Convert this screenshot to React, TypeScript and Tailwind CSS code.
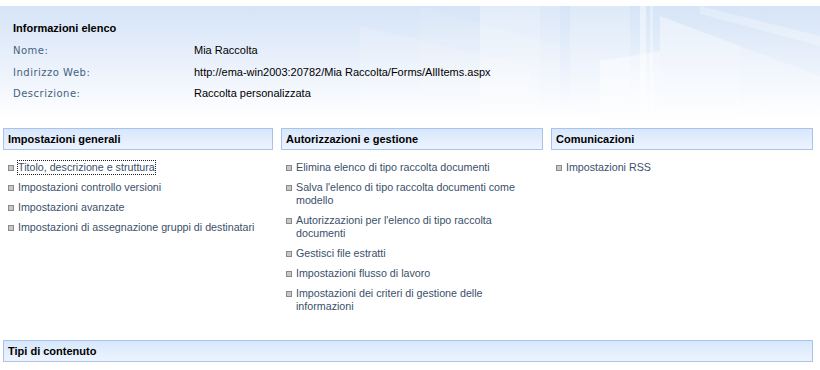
import React from "react";

const tahoma = { fontFamily: '"Liberation Sans", Arial, sans-serif' };

function Bullet() {
  return (
    <span className="mt-[4px] mr-[4px] inline-block h-[6px] w-[6px] shrink-0 border border-[#8a8a8a] bg-[#c8c8c8]" />
  );
}

function Item({ text, focus }: { text: string; focus?: boolean }) {
  return (
    <li className="flex items-start pl-[5px]">
      <Bullet />
      <span
        className={
          "text-[10.7px] leading-[13px] text-[#3b4f6b] " +
          (focus ? "outline-1 outline-dotted outline-[#222]" : "")
        }
      >
        {text}
      </span>
    </li>
  );
}

function Section({ title, items, className }: { title: string; items: string[]; className: string }) {
  return (
    <div className={className}>
      <div className="flex h-[22px] items-center border border-[#a9c4ec] bg-gradient-to-b from-[#d7e7fc] to-[#edf4fe] pl-[4px] text-[11px] font-bold text-black">
        {title}
      </div>
      <ul className="mt-[11px] flex flex-col gap-[7px]">
        {items.map((t, i) => (
          <Item key={t} text={t} focus={title === "Impostazioni generali" && i === 0} />
        ))}
      </ul>
    </div>
  );
}

function Buildings() {
  return (
    <svg className="absolute right-0 top-0 h-full w-[460px]" viewBox="0 0 460 114" preserveAspectRatio="none">
      <polygon points="0,20 170,60 170,114 0,114" fill="#ffffff" opacity="0.15" />
      <polygon points="60,0 200,40 200,114 60,114" fill="#ffffff" opacity="0.1" />
      <rect x="120" y="0" width="60" height="114" fill="#ffffff" opacity="0.3" />
      <rect x="180" y="0" width="20" height="114" fill="#ffffff" opacity="0.18" />
      <polygon points="210,0 270,0 270,114 210,114" fill="#ffffff" opacity="0.22" />
      <polygon points="240,55 300,45 300,114 240,114" fill="#ffffff" opacity="0.45" />
      <polygon points="300,10 380,40 380,114 300,114" fill="#ffffff" opacity="0.4" />
      <rect x="280" y="0" width="6" height="114" fill="#ffffff" opacity="0.45" />
      <rect x="290" y="0" width="3" height="114" fill="#ffffff" opacity="0.35" />
      <polygon points="380,40 460,70 460,114 380,114" fill="#ffffff" opacity="0.28" />
      <polygon points="340,0 460,30 460,40 340,8" fill="#ffffff" opacity="0.28" />
    </svg>
  );
}

export default function App() {
  return (
    <div className="h-[370px] w-[820px] overflow-hidden bg-white" style={tahoma}>
      <div className="h-[6px]" />
      <div className="relative h-[114px] bg-gradient-to-b from-[#d5e4f7] via-[#eaf1fb] to-white">
        <Buildings />
        <div className="relative pl-[13px] pt-[15px]">
          <div className="text-[11px] font-bold leading-[14px] text-black">Informazioni elenco</div>
          <div className="mt-[9px] flex flex-col gap-[8.5px]">
            {[
              ["Nome:", "Mia Raccolta"],
              ["Indirizzo Web:", "http://ema-win2003:20782/Mia Raccolta/Forms/AllItems.aspx"],
              ["Descrizione:", "Raccolta personalizzata"],
            ].map(([k, v]) => (
              <div key={k} className="flex h-[13px] items-center">
                <span
                  className="w-[181px] text-[10px] tracking-[0.5px] text-[#44627f]"
                  style={{ fontFamily: '"DejaVu Sans", Verdana, sans-serif' }}
                >
                  {k}
                </span>
                <span className="text-[11px] text-black">{v}</span>
              </div>
            ))}
          </div>
        </div>
      </div>
      <div className="mt-[8px] flex gap-[8px] pl-[3px]">
        <Section
          className="w-[270px]"
          title="Impostazioni generali"
          items={[
            "Titolo, descrizione e struttura",
            "Impostazioni controllo versioni",
            "Impostazioni avanzate",
            "Impostazioni di assegnazione gruppi di destinatari",
          ]}
        />
        <Section
          className="w-[262px]"
          title="Autorizzazioni e gestione"
          items={[
            "Elimina elenco di tipo raccolta documenti",
            "Salva l'elenco di tipo raccolta documenti come modello",
            "Autorizzazioni per l'elenco di tipo raccolta documenti",
            "Gestisci file estratti",
            "Impostazioni flusso di lavoro",
            "Impostazioni dei criteri di gestione delle informazioni",
          ]}
        />
        <Section className="w-[262px]" title="Comunicazioni" items={["Impostazioni RSS"]} />
      </div>
      <div className="mt-[27px] pl-[3px]">
        <div className="flex h-[22px] w-[810px] items-center border border-[#a9c4ec] bg-gradient-to-b from-[#d7e7fc] to-[#edf4fe] pl-[4px] text-[11px] font-bold text-black">
          Tipi di contenuto
        </div>
      </div>
    </div>
  );
}
